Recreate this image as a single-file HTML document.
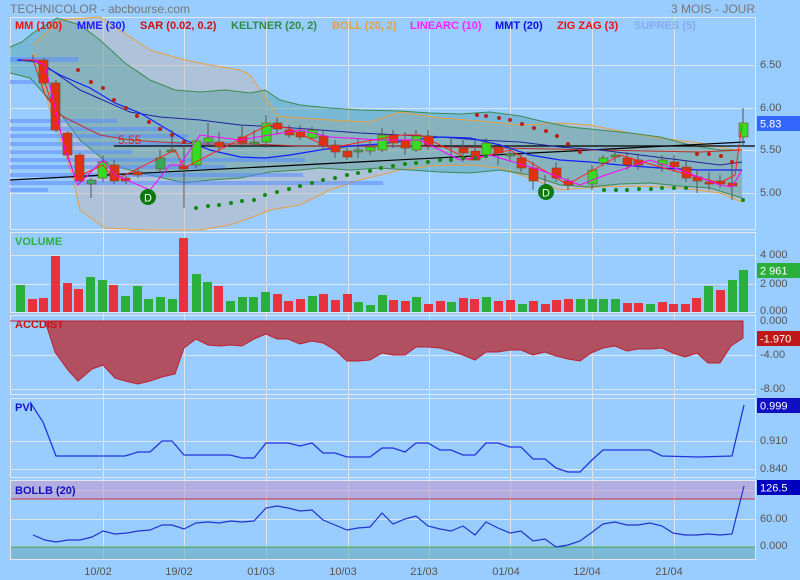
<!DOCTYPE html>
<html><head><meta charset="utf-8"><style>
html,body{margin:0;padding:0;background:#99ccff;}
svg{display:block;font-family:"Liberation Sans",sans-serif;}
</style></head><body>
<svg width="800" height="580" viewBox="0 0 800 580" xmlns="http://www.w3.org/2000/svg">
<rect width="800" height="580" fill="#99ccff"/>
<text x="10" y="13" font-size="12" fill="#777">TECHNICOLOR - abcbourse.com</text>
<text x="755" y="13" font-size="12" fill="#777" text-anchor="end">3 MOIS - JOUR</text>

<!-- grids -->
<g stroke="#e6e6ee" stroke-width="1" fill="none">
<rect x="10.5" y="17.5" width="745" height="212"/>
<rect x="10.5" y="232.5" width="745" height="80"/>
<rect x="10.5" y="315.5" width="745" height="79"/>
<rect x="10.5" y="398.5" width="745" height="79"/>
<rect x="10.5" y="480.5" width="745" height="79"/>
</g>
<g stroke="#e8e8e8" stroke-width="1" opacity="0.85">
<path d="M103.5 17V560M184.5 17V560M266.5 17V560M348.5 17V560M429.5 17V560M510.5 17V560M592.5 17V560M674.5 17V560"/>
<path d="M10 65.5H755M10 108.5H755M10 150.5H755M10 193.5H755"/>
<path d="M10 255.5H755M10 284.5H755M10 355.5H755M10 389.5H755M10 441.5H755M10 469.5H755M10 490.5H755M10 519.5H755M10 546.5H755"/>
</g>

<!-- Bollinger & Keltner bands -->
<polygon fill="rgba(200,185,170,0.45)" points="33,45 60,20 100,17 150,50 185,60 210,65 240,70 250,75 278,116 300,118 330,120 370,122 400,112 440,118 480,121 520,125 560,123 590,125 630,133 660,138 700,143 735,150 742,148 742,202 720,193 680,188 640,186 600,187 560,190 530,178 500,168 470,165 430,166 400,170 360,180 330,190 300,205 270,210 250,218 230,225 200,230 150,230 105,228 80,210 72,175 50,110 33,50"/>
<polygon fill="rgba(60,150,140,0.35)" points="10,47 22,42 33,33 57,18 80,25 100,40 125,63 150,80 175,90 200,92 225,90 250,93 265,90 280,100 300,105 330,108 360,110 400,111 430,113 460,114 490,112 520,116 545,122 570,127 600,130 630,133 660,137 690,145 720,150 742,150 742,198 710,188 680,186 650,183 620,184 590,187 560,185 530,175 500,170 470,173 440,172 410,170 380,168 350,170 320,168 300,170 270,172 240,178 210,180 185,183 150,175 110,165 80,140 50,100 30,78 10,73"/>
<polyline fill="none" stroke="#e8a040" stroke-width="1" points="33,45 60,20 100,17 150,50 185,60 210,65 240,70 250,75 278,116 300,118 330,120 370,122 400,112 440,118 480,121 520,125 560,123 590,125 630,133 660,138 700,143 735,150 742,148"/>
<polyline fill="none" stroke="#e8a040" stroke-width="1" points="33,50 50,110 72,175 80,210 105,228 150,230 200,230 230,225 250,218 270,210 300,205 330,190 360,180 400,170 430,166 470,165 500,168 530,178 560,190 600,187 640,186 680,188 720,193 742,202"/>
<polyline fill="none" stroke="#3a8a50" stroke-width="1" points="10,47 22,42 33,33 57,18 80,25 100,40 125,63 150,80 175,90 200,92 225,90 250,93 265,90 280,100 300,105 330,108 360,110 400,111 430,113 460,114 490,112 520,116 545,122 570,127 600,130 630,133 660,137 690,145 720,150 742,150"/>
<polyline fill="none" stroke="#3a8a50" stroke-width="1" points="10,73 30,78 50,100 80,140 110,165 150,175 185,183 210,180 240,178 270,172 300,170 320,168 350,170 380,168 410,170 440,172 470,173 500,170 530,175 560,185 590,187 620,184 650,183 680,186 710,188 742,198"/>

<!-- SUPRES bars -->
<g fill="rgba(90,140,255,0.55)">
<rect x="10" y="57" width="68" height="5"/><rect x="10" y="80" width="25" height="4"/>
<rect x="10" y="119" width="107" height="4"/><rect x="10" y="127" width="153" height="4"/>
<rect x="10" y="134" width="178" height="4"/><rect x="10" y="142" width="222" height="4"/>
<rect x="10" y="150" width="122" height="4"/><rect x="10" y="158" width="295" height="4"/>
<rect x="10" y="165" width="215" height="4"/><rect x="10" y="173" width="293" height="4"/>
<rect x="10" y="181" width="373" height="4"/><rect x="10" y="188" width="38" height="4"/>
</g>

<!-- black lines -->
<line x1="114" y1="146" x2="755" y2="146" stroke="#000" stroke-width="1.2"/>
<line x1="10" y1="180" x2="745" y2="142" stroke="#000" stroke-width="1.2"/>
<text x="118" y="144" font-size="12" fill="#e02020">5.55</text>

<!-- moving averages -->
<polyline fill="none" stroke="#c03030" stroke-width="1" points="17,60 33,60 45,95 60,115 80,125 100,135 130,140 160,142 200,144 250,144 300,146 400,146 500,148 600,150 700,152 742,150"/>
<polyline fill="none" stroke="#2020a0" stroke-width="1" points="17,60 40,62 80,90 130,112 160,117 200,120 240,125 280,127 320,130 360,133 400,135 440,137 480,140 520,142 560,147 600,150 640,155 680,160 720,165 742,162"/>
<polyline fill="none" stroke="#1020ff" stroke-width="1.2" points="17,60 33,60 60,75 90,88 115,103 140,113 160,125 185,140 210,150 240,157 265,158 290,155 320,150 350,146 380,144 410,140 440,137 470,138 500,145 530,155 560,160 590,162 620,165 660,168 700,170 742,170"/>

<!-- candles -->
<g stroke="#555" stroke-width="1">
<path d="M33 55V62M44 58V85M56 80V132M68 131V157M80 153V183M91 178V198M103 155V182M114 160V184M126 176V184M138 168V178M160 150V172M172 130V152M184 145V208M196 140V168M208 123V145M219 132V150M242 125V148M254 130V146M266 115V148M277 118V135M289 125V138M300 125V140M312 127V140M323 130V150M335 140V158M347 148V160M358 138V158M370 140V155M382 128V152M393 130V148M405 132V155M416 130V152M428 130V150M451 138V155M463 140V162M475 140V160M486 138V155M498 145V165M510 145V162M521 152V172M533 162V190M545 175V190M556 162V182M568 178V190M592 165V190M603 155V166M615 150V162M627 152V170M638 155V170M662 155V172M674 155V172M686 160V182M697 170V193M709 172V190M720 175V188M732 162V200M743 108V145"/>
</g>
<g stroke="#7a4a2a" stroke-width="0.6">
<rect x="39" y="60" width="9" height="23" fill="#dd3311"/>
<rect x="51" y="83" width="9" height="47" fill="#dd3311"/>
<rect x="63" y="133" width="9" height="22" fill="#dd3311"/>
<rect x="75" y="155" width="9" height="26" fill="#dd3311"/>
<rect x="87" y="180" width="9" height="4" fill="#33aa77"/>
<rect x="98" y="162" width="9" height="16" fill="#33dd22"/>
<rect x="110" y="165" width="9" height="16" fill="#dd3311"/>
<rect x="121" y="178" width="9" height="3" fill="#dd3311"/>
<rect x="133" y="172" width="9" height="3" fill="#dd3311"/>
<rect x="156" y="158" width="9" height="11" fill="#33aa55"/>
<rect x="167" y="150" width="9" height="2" fill="#33aa55"/>
<rect x="179" y="166" width="9" height="3" fill="#dd3311"/>
<rect x="192" y="141" width="9" height="24" fill="#33dd22"/>
<rect x="204" y="138" width="9" height="4" fill="#33dd22"/>
<rect x="215" y="142" width="9" height="5" fill="#dd3311"/>
<rect x="238" y="137" width="9" height="6" fill="#dd3311"/>
<rect x="250" y="142" width="9" height="2" fill="#33aa55"/>
<rect x="262" y="123" width="9" height="19" fill="#33dd22"/>
<rect x="273" y="123" width="9" height="6" fill="#dd3311"/>
<rect x="285" y="130" width="9" height="5" fill="#dd3311"/>
<rect x="296" y="132" width="9" height="5" fill="#dd3311"/>
<rect x="308" y="130" width="9" height="8" fill="#33dd22"/>
<rect x="319" y="136" width="9" height="9" fill="#dd3311"/>
<rect x="331" y="145" width="9" height="7" fill="#dd3311"/>
<rect x="343" y="151" width="9" height="6" fill="#dd3311"/>
<rect x="354" y="150" width="9" height="2" fill="#33aa55"/>
<rect x="366" y="147" width="9" height="4" fill="#33dd22"/>
<rect x="378" y="135" width="9" height="15" fill="#33dd22"/>
<rect x="389" y="135" width="9" height="8" fill="#dd3311"/>
<rect x="401" y="140" width="9" height="8" fill="#dd3311"/>
<rect x="412" y="136" width="9" height="14" fill="#33dd22"/>
<rect x="424" y="136" width="9" height="9" fill="#dd3311"/>
<rect x="459" y="148" width="9" height="5" fill="#dd3311"/>
<rect x="471" y="151" width="9" height="9" fill="#dd3311"/>
<rect x="482" y="143" width="9" height="12" fill="#33dd22"/>
<rect x="494" y="147" width="9" height="6" fill="#dd3311"/>
<rect x="506" y="154" width="9" height="2" fill="#33aa55"/>
<rect x="517" y="158" width="9" height="10" fill="#dd3311"/>
<rect x="529" y="168" width="9" height="13" fill="#dd3311"/>
<rect x="552" y="168" width="9" height="10" fill="#dd3311"/>
<rect x="564" y="181" width="9" height="4" fill="#dd3311"/>
<rect x="588" y="170" width="9" height="14" fill="#33dd22"/>
<rect x="599" y="158" width="9" height="5" fill="#33dd22"/>
<rect x="611" y="155" width="9" height="2" fill="#33aa55"/>
<rect x="623" y="158" width="9" height="7" fill="#dd3311"/>
<rect x="634" y="160" width="9" height="5" fill="#dd3311"/>
<rect x="658" y="160" width="9" height="5" fill="#33dd22"/>
<rect x="670" y="162" width="9" height="5" fill="#dd3311"/>
<rect x="682" y="167" width="9" height="11" fill="#dd3311"/>
<rect x="693" y="177" width="9" height="4" fill="#dd3311"/>
<rect x="705" y="182" width="9" height="2" fill="#dd3311"/>
<rect x="716" y="181" width="9" height="3" fill="#dd3311"/>
<rect x="728" y="183" width="9" height="3" fill="#dd3311"/>
<rect x="739" y="123" width="9" height="14" fill="#33dd22"/>
</g>

<!-- zigzag & linearc -->
<polyline fill="none" stroke="#ff2020" stroke-width="1" points="22,60 38,60 75,178 103,165 115,180 175,150 184,168 268,125 288,128 330,148 400,135 420,135 470,160 510,150 565,183 570,183 620,155 660,167 720,183 735,175 742,125"/>
<polyline fill="none" stroke="#ff00ff" stroke-width="1" points="33,60 45,65 65,150 78,185 103,160 115,175 150,190 170,165 180,165 200,135 240,140 300,130 330,137 380,140 420,140 460,160 490,155 540,170 580,185 600,177 650,160 680,170 720,185 732,187 742,170"/>

<!-- SAR dots -->
<g fill="#bb2211">
<circle cx="78" cy="70" r="2"/><circle cx="91" cy="82" r="2"/><circle cx="103" cy="88" r="2"/><circle cx="114" cy="100" r="2"/><circle cx="126" cy="108" r="2"/><circle cx="137" cy="116" r="2"/><circle cx="149" cy="122" r="2"/><circle cx="160" cy="129" r="2"/><circle cx="172" cy="135" r="2"/><circle cx="184" cy="142" r="2"/>
<circle cx="477" cy="115" r="2"/><circle cx="486" cy="116" r="2"/><circle cx="499" cy="118" r="2"/><circle cx="510" cy="120" r="2"/><circle cx="522" cy="124" r="2"/><circle cx="534" cy="128" r="2"/><circle cx="546" cy="131" r="2"/><circle cx="557" cy="136" r="2"/><circle cx="568" cy="144" r="2"/><circle cx="580" cy="152" r="2"/>
<circle cx="697" cy="154" r="2"/><circle cx="709" cy="154" r="2"/><circle cx="721" cy="156" r="2"/><circle cx="732" cy="162" r="2"/>
</g>
<g fill="#118811">
<circle cx="196" cy="208" r="2"/><circle cx="208" cy="206" r="2"/><circle cx="219" cy="205" r="2"/><circle cx="231" cy="203" r="2"/><circle cx="242" cy="201" r="2"/><circle cx="254" cy="200" r="2"/><circle cx="265" cy="195" r="2"/><circle cx="277" cy="192" r="2"/><circle cx="289" cy="189" r="2"/><circle cx="300" cy="186" r="2"/><circle cx="312" cy="183" r="2"/><circle cx="323" cy="180" r="2"/><circle cx="335" cy="178" r="2"/><circle cx="347" cy="175" r="2"/><circle cx="358" cy="173" r="2"/><circle cx="370" cy="171" r="2"/><circle cx="381" cy="168" r="2"/><circle cx="393" cy="166" r="2"/><circle cx="405" cy="164" r="2"/><circle cx="416" cy="163" r="2"/><circle cx="428" cy="162" r="2"/><circle cx="440" cy="160" r="2"/><circle cx="451" cy="160" r="2"/><circle cx="463" cy="158" r="2"/><circle cx="475" cy="158" r="2"/><circle cx="486" cy="156" r="2"/>
<circle cx="604" cy="190" r="2"/><circle cx="616" cy="190" r="2"/><circle cx="627" cy="190" r="2"/><circle cx="639" cy="189" r="2"/><circle cx="651" cy="189" r="2"/><circle cx="662" cy="188" r="2"/><circle cx="674" cy="188" r="2"/><circle cx="686" cy="188" r="2"/><circle cx="743" cy="200" r="2"/>
</g>
<circle cx="148" cy="197" r="8" fill="#0a7a0a"/><text x="148" y="201.5" font-size="11" fill="#fff" text-anchor="middle">D</text>
<circle cx="546" cy="192" r="8" fill="#0a7a0a"/><text x="546" y="196.5" font-size="11" fill="#fff" text-anchor="middle">D</text>

<!-- legend -->
<g font-size="11" font-weight="bold">
<text x="15" y="29" fill="#ee1111">MM (100)</text>
<text x="77" y="29" fill="#1a1aff">MME (30)</text>
<text x="140" y="29" fill="#cc1111">SAR (0.02, 0.2)</text>
<text x="231" y="29" fill="#2e8b4a">KELTNER (20, 2)</text>
<text x="332" y="29" fill="#e8a040">BOLL (20, 2)</text>
<text x="410" y="29" fill="#ff22ff">LINEARC (10)</text>
<text x="495" y="29" fill="#1010dd">MMT (20)</text>
<text x="557" y="29" fill="#ee1111">ZIG ZAG (3)</text>
<text x="634" y="29" fill="#88aaee">SUPRES (5)</text>
</g>

<!-- VOLUME -->
<g fill="#2aaf3c">
<rect x="16" y="285" width="9" height="27"/><rect x="86" y="277" width="9" height="35"/><rect x="98" y="280" width="9" height="32"/><rect x="121" y="296" width="9" height="16"/><rect x="133" y="286" width="9" height="26"/><rect x="144" y="299" width="9" height="13"/><rect x="156" y="297" width="9" height="15"/><rect x="168" y="299" width="9" height="13"/><rect x="192" y="274" width="9" height="38"/><rect x="203" y="282" width="9" height="30"/><rect x="226" y="301" width="9" height="11"/><rect x="238" y="297" width="9" height="15"/><rect x="249" y="297" width="9" height="15"/><rect x="261" y="292" width="9" height="20"/><rect x="308" y="296" width="9" height="16"/><rect x="354" y="302" width="9" height="10"/><rect x="366" y="305" width="9" height="7"/><rect x="378" y="295" width="9" height="17"/><rect x="412" y="297" width="9" height="15"/><rect x="447" y="302" width="9" height="10"/><rect x="482" y="297" width="9" height="15"/><rect x="518" y="304" width="9" height="8"/><rect x="576" y="299" width="9" height="13"/><rect x="588" y="299" width="9" height="13"/><rect x="599" y="299" width="9" height="13"/><rect x="611" y="299" width="9" height="13"/><rect x="646" y="304" width="9" height="8"/><rect x="704" y="286" width="9" height="26"/><rect x="728" y="280" width="9" height="32"/><rect x="739" y="270" width="9" height="42"/>
</g>
<g fill="#e8333e">
<rect x="28" y="299" width="9" height="13"/><rect x="39" y="298" width="9" height="14"/><rect x="51" y="256" width="9" height="56"/><rect x="63" y="283" width="9" height="29"/><rect x="74" y="289" width="9" height="23"/><rect x="109" y="285" width="9" height="27"/><rect x="179" y="238" width="9" height="74"/><rect x="214" y="286" width="9" height="26"/><rect x="273" y="294" width="9" height="18"/><rect x="284" y="301" width="9" height="11"/><rect x="296" y="299" width="9" height="13"/><rect x="319" y="294" width="9" height="18"/><rect x="331" y="300" width="9" height="12"/><rect x="343" y="294" width="9" height="18"/><rect x="389" y="300" width="9" height="12"/><rect x="401" y="301" width="9" height="11"/><rect x="424" y="304" width="9" height="8"/><rect x="436" y="301" width="9" height="11"/><rect x="459" y="298" width="9" height="14"/><rect x="470" y="299" width="9" height="13"/><rect x="494" y="301" width="9" height="11"/><rect x="506" y="300" width="9" height="12"/><rect x="529" y="301" width="9" height="11"/><rect x="541" y="304" width="9" height="8"/><rect x="552" y="300" width="9" height="12"/><rect x="564" y="299" width="9" height="13"/><rect x="623" y="303" width="9" height="9"/><rect x="634" y="303" width="9" height="9"/><rect x="658" y="302" width="9" height="10"/><rect x="669" y="304" width="9" height="8"/><rect x="681" y="304" width="9" height="8"/><rect x="692" y="298" width="9" height="14"/><rect x="716" y="290" width="9" height="22"/>
</g>
<text x="15" y="245" font-size="11" font-weight="bold" fill="#2aaf3c">VOLUME</text>

<!-- ACCDIST -->
<polygon fill="#b05060" stroke="#c02030" stroke-width="1" points="10,321 45,321 55,352 68,370 78,381 92,369 103,365 115,378 125,381 138,384 150,381 162,377 175,374 184,348 196,339 208,345 219,346 231,345 242,346 254,339 266,334 277,339 288,339 300,344 312,341 323,343 335,350 347,361 358,361 370,360 382,353 393,355 405,355 416,347 428,347 440,348 451,351 463,355 475,360 486,352 498,352 510,350 521,350 533,355 545,352 556,356 568,359 580,361 591,353 603,348 615,346 627,351 638,349 650,349 662,348 673,353 685,357 697,353 708,363 720,363 731,346 743,338 743,321"/>
<text x="15" y="328" font-size="11" font-weight="bold" fill="#cc1111">ACCDIST</text>

<!-- PVI -->
<polyline fill="none" stroke="#2233dd" stroke-width="1.3" points="30,402 43,422 56,456 125,456 138,452 150,452 162,441 172,441 184,455 230,455 242,458 254,458 266,443 288,443 300,446 312,443 323,453 335,453 347,457 370,457 382,448 393,448 405,452 416,443 428,443 440,450 451,450 463,455 475,455 486,443 498,443 510,447 521,447 533,459 545,459 556,468 568,472 580,472 592,460 603,450 650,450 662,456 698,457 732,456 744,405"/>
<text x="15" y="411" font-size="11" font-weight="bold" fill="#1111cc">PVI</text>

<!-- BOLLB -->
<rect x="11" y="481" width="744" height="18" fill="rgba(200,150,200,0.55)"/>
<line x1="11" y1="499" x2="755" y2="499" stroke="#cc3333"/>
<rect x="11" y="547" width="744" height="12" fill="rgba(100,170,180,0.55)"/>
<line x1="11" y1="547" x2="755" y2="547" stroke="#339955"/>
<polyline fill="none" stroke="#2233cc" stroke-width="1.2" points="33,535 45,540 56,542 68,540 80,540 92,537 103,531 115,534 127,533 138,531 150,530 162,525 172,525 184,529 196,523 208,522 219,523 231,521 242,522 254,521 266,508 277,506 288,508 300,511 312,510 323,520 335,525 347,530 358,528 370,527 382,513 393,524 405,519 416,516 428,526 440,529 451,531 463,526 475,535 486,522 498,528 510,533 521,531 533,541 545,539 556,547 568,545 580,541 591,533 603,524 615,522 627,525 638,525 650,523 662,526 673,533 685,535 697,535 708,534 720,535 732,534 744,486"/>
<text x="15" y="494" font-size="11" font-weight="bold" fill="#1111bb">BOLLB (20)</text>

<!-- right axis labels -->
<g font-size="11" fill="#555">
<text x="760" y="68">6.50</text><text x="760" y="111">6.00</text><text x="760" y="153">5.50</text><text x="760" y="196">5.00</text>
<text x="760" y="258">4 000</text><text x="760" y="287">2 000</text><text x="760" y="314">0.000</text>
<text x="760" y="324">0.000</text><text x="760" y="358">-4.00</text><text x="760" y="392">-8.00</text>
<text x="760" y="444">0.910</text><text x="760" y="472">0.840</text>
<text x="760" y="522">60.00</text><text x="760" y="549">0.000</text>
</g>
<rect x="757" y="116" width="43" height="15" fill="#3366ff"/><text x="760" y="127.5" font-size="11" fill="#fff">5.83</text>
<rect x="757" y="263" width="43" height="15" fill="#2aaf3c"/><text x="760" y="274.5" font-size="11" fill="#fff">2 961</text>
<rect x="757" y="331" width="43" height="15" fill="#c01818"/><text x="760" y="342.5" font-size="11" fill="#fff">-1.970</text>
<rect x="757" y="398" width="43" height="15" fill="#1010c0"/><text x="760" y="409.5" font-size="11" fill="#fff">0.999</text>
<rect x="757" y="480" width="43" height="15" fill="#0000c0"/><text x="760" y="491.5" font-size="11" fill="#fff">126.5</text>

<!-- x axis labels -->
<g font-size="11" fill="#555" text-anchor="middle">
<text x="98" y="575">10/02</text><text x="179" y="575">19/02</text><text x="261" y="575">01/03</text><text x="343" y="575">10/03</text><text x="424" y="575">21/03</text><text x="506" y="575">01/04</text><text x="587" y="575">12/04</text><text x="669" y="575">21/04</text>
</g>
</svg>
</body></html>
